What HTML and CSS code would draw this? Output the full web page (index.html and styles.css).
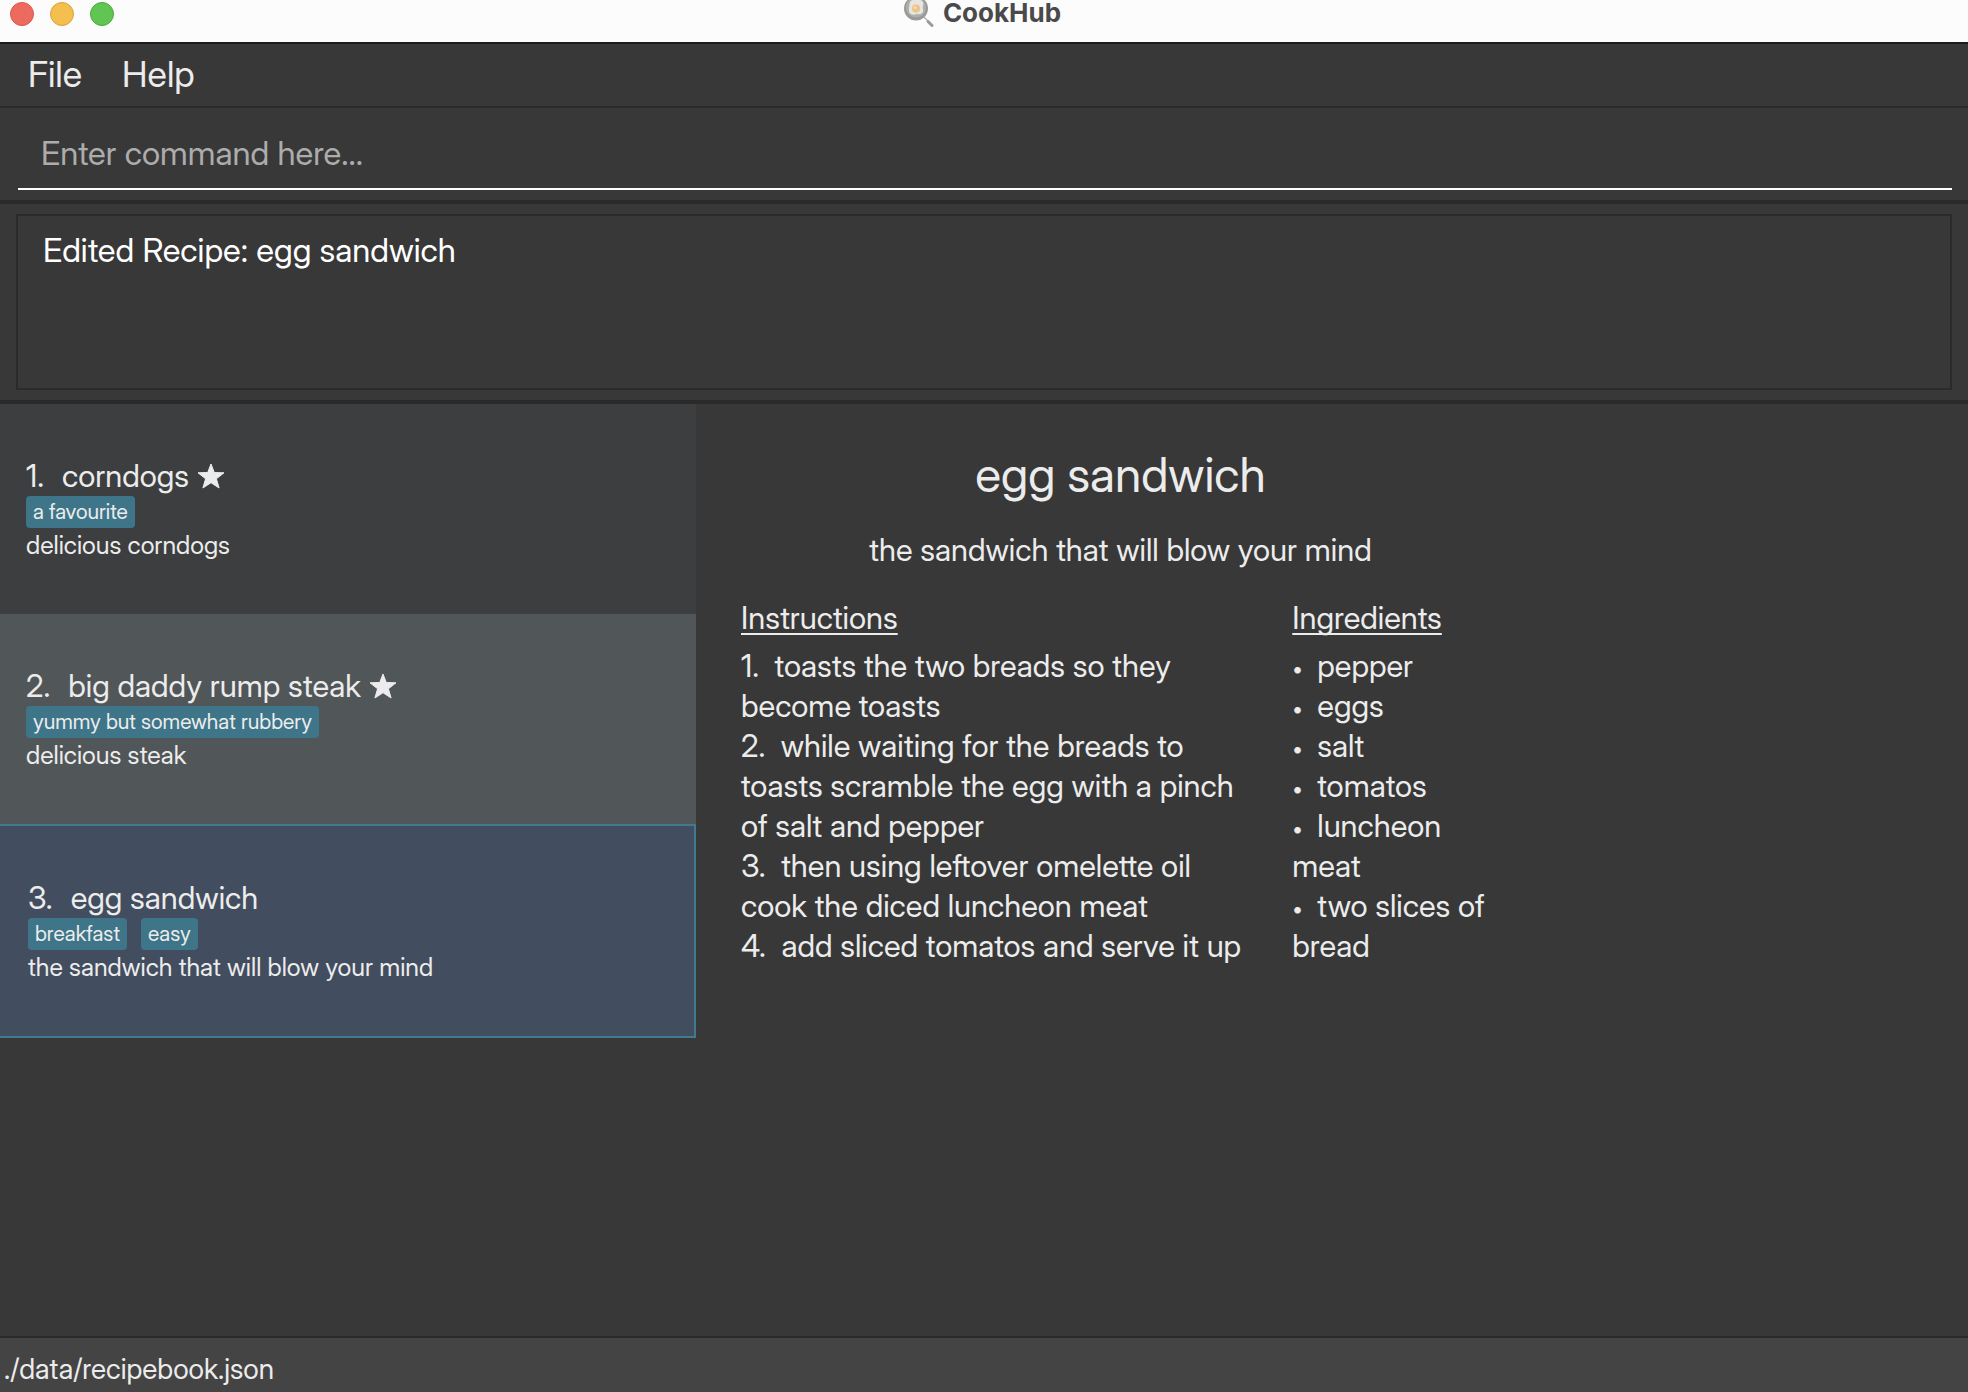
FILE: index.html
```html
<!DOCTYPE html>
<html lang="en">
<head>
<meta charset="utf-8">
<title>CookHub</title>
<link rel="stylesheet" href="styles.css">
</head>
<body>
<div class="app">
  <header class="titlebar">
    <div class="window-controls">
      <button class="dot close" aria-label="Close"></button>
      <button class="dot minimise" aria-label="Minimise"></button>
      <button class="dot zoom" aria-label="Zoom"></button>
    </div>
    <h1 class="app-title">
      <svg class="pan" viewBox="0 0 32 28" aria-hidden="true">
        <path d="M21 17l5 5" stroke="#b4b4b4" stroke-width="1.500"/>
        <path d="M25 21.500l4 4" stroke="#999" stroke-width="3" stroke-linecap="round"/>
        <circle cx="13" cy="8.500" r="12" fill="#989a98"/>
        <circle cx="13" cy="7.500" r="10" fill="#adafac"/>
        <path d="M7 2c3-4 10-4 13 0 1 3-1 4 0 7 1 4-2 6-6 5-4 2-8 0-8-3s0-5 1-9z" fill="#e6e5df"/>
        <circle cx="13" cy="8.500" r="4" fill="#edc38a"/>
        <circle cx="12" cy="7.500" r="1.500" fill="#f6dcb2"/>
      </svg>
      <span>CookHub</span>
    </h1>
  </header>

  <nav class="menubar">
    <button class="menu">File</button>
    <button class="menu">Help</button>
  </nav>

  <form class="command">
    <input class="command-input" type="text" aria-label="Command" placeholder="Enter command here...">
  </form>

  <section class="result">
    <output class="result-box">Edited Recipe: egg sandwich</output>
  </section>

  <main class="content">
    <ul class="recipes">
      <li class="card">
        <h2 class="card-title"><span>1.</span><span>corndogs</span>
          <svg class="star" viewBox="0 0 28 26" aria-label="Favourite"><path d="M14 1l3.300 8.500 9.700.3-7.600 6 2.700 9.200-8.100-5.300-8.100 5.300 2.700-9.200-7.600-6 9.700-.3z"/></svg>
        </h2>
        <div class="tags"><span class="tag">a favourite</span></div>
        <p class="summary">delicious corndogs</p>
      </li>
      <li class="card alt">
        <h2 class="card-title"><span>2.</span><span>big daddy rump steak</span>
          <svg class="star" viewBox="0 0 28 26" aria-label="Favourite"><path d="M14 1l3.300 8.500 9.700.3-7.600 6 2.700 9.200-8.100-5.300-8.100 5.300 2.700-9.200-7.600-6 9.700-.3z"/></svg>
        </h2>
        <div class="tags"><span class="tag">yummy but somewhat rubbery</span></div>
        <p class="summary">delicious steak</p>
      </li>
      <li class="card selected">
        <h2 class="card-title"><span>3.</span><span>egg sandwich</span></h2>
        <div class="tags"><span class="tag">breakfast</span><span class="tag">easy</span></div>
        <p class="summary">the sandwich that will blow your mind</p>
      </li>
    </ul>

    <article class="detail">
      <h2 class="detail-title">egg sandwich</h2>
      <p class="detail-summary">the sandwich that will blow your mind</p>
      <div class="columns">
        <section>
          <h3 class="column-title">Instructions</h3>
          <ol class="lines">
            <li>1.&nbsp; toasts the two breads so they become toasts</li>
            <li>2.&nbsp; while waiting for the breads to toasts scramble the egg with a pinch of salt and pepper</li>
            <li>3.&nbsp; then using leftover omelette oil cook the diced luncheon meat</li>
            <li>4.&nbsp; add sliced tomatos and serve it up</li>
          </ol>
        </section>
        <section>
          <h3 class="column-title">Ingredients</h3>
          <ul class="lines">
            <li><span class="bullet">•</span>pepper</li>
            <li><span class="bullet">•</span>eggs</li>
            <li><span class="bullet">•</span>salt</li>
            <li><span class="bullet">•</span>tomatos</li>
            <li><span class="bullet">•</span>luncheon meat</li>
            <li><span class="bullet">•</span>two slices of bread</li>
          </ul>
        </section>
      </div>
    </article>
  </main>

  <footer class="statusbar">./data/recipebook.json</footer>
</div>
</body>
</html>
```
FILE: styles.css
```css
* {
  box-sizing: border-box;
}

body {
  margin: 0;
  background: #383838;
  color: #ececec;
  font-family: "Inter Display", Inter, "Liberation Sans", sans-serif;
  font-size: 31px;
  line-height: 40px;
}

h1, h2, h3, p, ul, ol {
  margin: 0;
  padding: 0;
  font-size: inherit;
  font-weight: 400;
  list-style: none;
}

button, input {
  border: 0;
  padding: 0;
  background: none;
  color: inherit;
  font: inherit;
}

.app {
  display: flex;
  flex-direction: column;
  min-height: 100vh;
}

/* Title bar */
.titlebar {
  display: grid;
  grid-template-columns: 1fr auto 1fr;
  height: 44px;
  border-bottom: 2px solid #1c1c1c;
  background: #fcfcfc;
}

.window-controls {
  display: flex;
  gap: 16px;
  padding: 2px 10px;
}

.dot {
  width: 24px;
  height: 24px;
  border: 1px solid #d8564c;
  border-radius: 50%;
  background: #ed6a5e;
}

.minimise {
  border-color: #d9a23c;
  background: #f5bf4f;
}

.zoom {
  border-color: #4ea73d;
  background: #61c554;
}

.app-title {
  display: flex;
  gap: 8px;
  padding-right: 4px;
  color: #4a4a4a;
  font-family: Inter, "Liberation Sans", sans-serif;
  font-size: 26px;
  font-weight: 700;
  line-height: 26px;
}

.pan {
  width: 32px;
  height: 28px;
}

/* Menus */
.menubar {
  display: flex;
  gap: 40px;
  padding: 10px 28px 12px;
  border-bottom: 2px solid #2a2a2a;
}

.menu {
  font-size: 36px;
}

/* Command entry */
.command {
  padding: 10px 16px 10px 18px;
  border-bottom: 4px solid #2a2a2a;
}

.command-input {
  display: block;
  width: 100%;
  height: 72px;
  padding: 0 23px;
  border-bottom: 2px solid #fff;
  outline: 0;
  color: #fff;
  font-size: 33px;
}

.command-input::placeholder {
  color: #acacac;
  opacity: 1;
}

/* Result message */
.result {
  padding: 10px 16px;
  border-bottom: 4px solid #2a2a2a;
}

.result-box {
  display: block;
  min-height: 176px;
  padding: 14px 25px;
  border: 2px solid #2a2a2a;
  color: #fff;
  font-size: 33px;
}

/* Recipe list */
.content {
  display: grid;
  flex: 1;
  grid-template-columns: 29fr 53fr;
}

.card {
  min-height: 210px;
  padding: 52px 26px;
  background: #3c3e3f;
}

.alt {
  background: #515658;
}

.selected {
  min-height: 214px;
  border: 2px solid #3e7b91;
  border-left-width: 0;
  padding-left: 28px;
  background: #424d5f;
}

.card-title {
  display: flex;
  align-items: center;
  gap: 18px;
}

.star {
  width: 28px;
  height: 26px;
  margin-left: -10px;
  fill: #ececec;
  stroke: #ececec;
  stroke-linejoin: round;
}

.tags {
  display: flex;
  gap: 14px;
}

.tag {
  padding: 0 7px;
  border-radius: 4px;
  background: #3e7589;
  font-size: 21px;
  line-height: 32px;
}

.summary {
  font-size: 25px;
  line-height: 34px;
}

/* Recipe detail */
.detail {
  max-width: 804px;
  padding: 41px 0 0 45px;
}

.detail-title {
  font-size: 48px;
  line-height: 60px;
  text-align: center;
}

.detail-summary {
  padding: 25px 0 28px;
  text-align: center;
}

.columns {
  display: grid;
  grid-template-columns: 5fr 2fr;
  gap: 32px;
}

.column-title {
  padding-bottom: 8px;
  text-decoration: underline;
  text-decoration-thickness: 2px;
  text-decoration-skip-ink: none;
  text-underline-offset: 4px;
}

.bullet {
  display: inline-block;
  width: 25px;
  font-size: 21px;
  line-height: 20px;
  vertical-align: middle;
}

/* Status bar */
.statusbar {
  padding: 16px 4px 8px;
  border-top: 2px solid #2a2a2a;
  background: #444;
  font-size: 28px;
  line-height: 30px;
}
```
